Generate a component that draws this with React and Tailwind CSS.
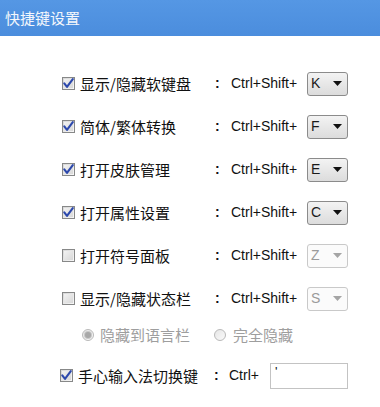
import { useState } from "react";

function CheckBox({ checked }) {
  return (
    <span className="w-[13px] h-[13px] shrink-0 border border-[#878888] bg-gradient-to-br from-[#d6d6d6] to-[#f8f8f8] flex items-center justify-center">
      <span className="w-[9px] h-[9px] bg-gradient-to-br from-[#f2f2f2] to-[#d8d8d8] flex items-center justify-center">
        {checked && (
          <svg width="11" height="11" viewBox="0 0 11 11" className="overflow-visible">
            <path d="M1.3 5.3 L4 8.8 L9.8 1.2" fill="none" stroke="#2c48ac" strokeWidth="2.1" strokeLinecap="round" strokeLinejoin="round" />
          </svg>
        )}
      </span>
    </span>
  );
}

function Radio({ checked }) {
  return (
    <span className="w-[12px] h-[12px] shrink-0 rounded-full border border-[#b9b9b9] bg-gradient-to-br from-[#e6e6e6] to-[#fafafa] flex items-center justify-center">
      {checked && <span className="w-[6px] h-[6px] rounded-full bg-[#a8a8a8] ring-1 ring-[#c8c8c8]" />}
    </span>
  );
}

function KeySelect({ value, disabled }) {
  return (
    <div
      className={
        "w-[41px] h-[24px] rounded-[3px] border flex items-center justify-between pl-[3px] pr-[5px] text-[14px] " +
        (disabled
          ? "border-[#c9c9c9] bg-[#fbfbfb] text-[#9a9a9a]"
          : "border-[#8b8b8b] bg-gradient-to-b from-[#f3f3f3] to-[#dcdcdc] text-[#1a1a1a]")
      }
    >
      <span>{value}</span>
      <svg width="9" height="5" viewBox="0 0 9 5">
        <path d="M0 0 L9 0 L4.5 5 Z" fill={disabled ? "#a5a5a5" : "#111"} />
      </svg>
    </div>
  );
}

const rows = [
  { label: "显示/隐藏软键盘", key: "K", checked: true },
  { label: "简体/繁体转换", key: "F", checked: true },
  { label: "打开皮肤管理", key: "E", checked: true },
  { label: "打开属性设置", key: "C", checked: true },
  { label: "打开符号面板", key: "Z", checked: false },
  { label: "显示/隐藏状态栏", key: "S", checked: false },
];

export default function App() {
  const [hotkey] = useState("'");

  return (
    <div className="w-[380px] h-[407px] bg-white overflow-hidden font-['Liberation_Sans','Noto_Sans_CJK_SC',sans-serif] text-[#111]">
      <div className="h-9 bg-gradient-to-b from-[#5597e4] to-[#4b8ddd] flex items-center pl-[5px] text-[15px] text-[#f4f7fc] font-['Noto_Sans_CJK_SC',sans-serif]">
        快捷键设置
      </div>

      <div className="pt-[26px] pl-[62px]">
        {rows.map((row) => (
          <div key={row.label} className="flex items-center h-[43px]">
            <CheckBox checked={row.checked} />
            <span className="w-[134px] ml-[5px] text-[15px] font-['Noto_Sans_CJK_SC',sans-serif] leading-none">
              {row.label}
            </span>
            <span className="w-[17px] pl-[1px] text-[14px] font-bold">:</span>
            <span className="w-[76px] text-[14px]">Ctrl+Shift+</span>
            <KeySelect value={row.key} disabled={!row.checked} />
          </div>
        ))}

        <div className="flex items-center h-[29px] pl-[20px] text-[15px] text-[#9e9e9e] font-['Noto_Sans_CJK_SC',sans-serif]">
          <Radio checked />
          <span className="w-[114px] ml-[6px] leading-none">隐藏到语言栏</span>
          <Radio />
          <span className="ml-[7px] leading-none">完全隐藏</span>
        </div>

        <div className="flex items-center h-[43px] mt-[5px] -ml-[2px]">
          <CheckBox checked />
          <span className="w-[135px] ml-[5px] text-[15px] font-['Noto_Sans_CJK_SC',sans-serif] leading-none">
            手心输入法切换键
          </span>
          <span className="w-[16px] pl-[1px] text-[14px] font-bold">:</span>
          <span className="w-[41px] text-[14px]">Ctrl+</span>
          <div className="w-[78px] h-[26px] border border-[#c3c3c3] bg-white pl-[4px] pt-[1px] text-[13px] leading-none">
            {hotkey}
          </div>
        </div>
      </div>
    </div>
  );
}
